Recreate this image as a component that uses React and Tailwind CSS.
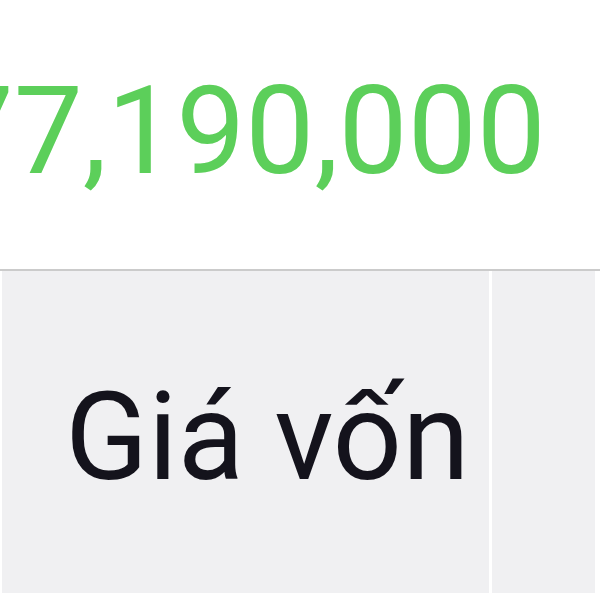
export default function App() {
  return (
    <div className="w-[600px] h-[600px] overflow-hidden bg-white flex flex-col" style={{ fontFamily: "Roboto, 'Noto Sans', sans-serif" }}>
      {/* Total amount */}
      <div className="h-[269px] flex items-start justify-end pr-[54px] pt-[51px] whitespace-nowrap">
        <span className="text-[123px] leading-[160px] text-[#5ccf5a]">77,190,000</span>
      </div>

      {/* Table header */}
      <div className="border-t-2 border-[#cbcbcb] flex flex-1 bg-white pb-[7px]">
        <div className="ml-[2px] w-[487px] bg-[#f0f0f2] flex items-center pl-[63px] pt-[12px]">
          <span className="text-[122px] leading-none text-[#14131c]">Giá vốn</span>
        </div>
        <div className="ml-[3px] w-[103px] bg-[#f0f0f2]" />
      </div>
    </div>
  );
}
